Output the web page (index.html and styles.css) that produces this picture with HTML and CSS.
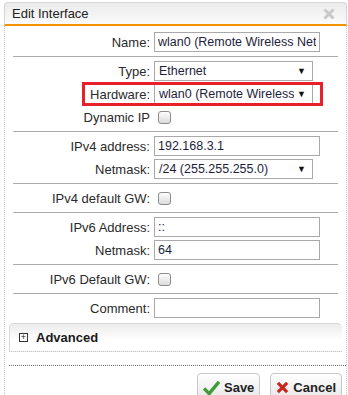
FILE: index.html
```html
<html lang="en"><head>
    <meta charset="UTF-8">
    <title>Edit Interface</title>
    <link rel="stylesheet" href="styles.css">
</head>
<body>
<div class="dialog">
    <div class="titlebar">
        <span class="title">Edit Interface</span>
        <svg class="close" width="12" height="12" viewBox="0 0 12 12">
            <path d="M1.5 1.5 L10.5 10.5 M10.5 1.5 L1.5 10.5" stroke="#c9c9c9" stroke-width="3"/>
        </svg>
    </div>
    <div class="body">
        <div class="form">
            <div class="group">
                <div class="row">
                    <label>Name:</label>
                    <input class="text" type="text" value="wlan0 (Remote Wireless Network)">
                </div>
            </div>
            <div class="group">
                <div class="row">
                    <label>Type:</label>
                    <div class="select"><span>Ethernet</span><span class="arrow">▼</span></div>
                </div>
                <div class="row marked">
                    <label>Hardware:</label>
                    <div class="select"><span>wlan0 (Remote Wireless Network)</span><span class="arrow">▼</span></div>
                </div>
                <div class="row">
                    <label>Dynamic IP</label>
                    <input class="check" type="checkbox">
                </div>
            </div>
            <div class="group">
                <div class="row">
                    <label>IPv4 address:</label>
                    <input class="text" type="text" value="192.168.3.1">
                </div>
                <div class="row">
                    <label>Netmask:</label>
                    <div class="select"><span>/24 (255.255.255.0)</span><span class="arrow">▼</span></div>
                </div>
            </div>
            <div class="group">
                <div class="row">
                    <label>IPv4 default GW:</label>
                    <input class="check" type="checkbox">
                </div>
            </div>
            <div class="group">
                <div class="row">
                    <label>IPv6 Address:</label>
                    <input class="text" type="text" value="::">
                </div>
                <div class="row">
                    <label>Netmask:</label>
                    <input class="text" type="text" value="64">
                </div>
            </div>
            <div class="group">
                <div class="row">
                    <label>IPv6 Default GW:</label>
                    <input class="check" type="checkbox">
                </div>
            </div>
            <div class="group last">
                <div class="row">
                    <label>Comment:</label>
                    <input class="text" type="text" value="">
                </div>
            </div>
        </div>
        <div class="advanced">
            <span class="plus">+</span>
            <span>Advanced</span>
        </div>
        <div class="buttons">
            <button type="button">
                <svg width="17" height="15" viewBox="0 0 18 16">
                    <path d="M1 9 L6.5 14.5 L17 2" fill="none" stroke="#3f9b35" stroke-width="3.6"/>
                </svg>
                Save
            </button>
            <button type="button">
                <svg width="13" height="13" viewBox="0 0 14 14">
                    <path d="M2 2 L12 12 M12 2 L2 12" stroke="#c8281f" stroke-width="3.4"/>
                </svg>
                Cancel
            </button>
        </div>
    </div>
</div>
</body>
</html>
```

FILE: styles.css
```css
body {
    margin: 0;
    padding: 0;
    background: #fff;
    font-family: "Liberation Sans", Arial, sans-serif;
    font-size: 13px;
    color: #222;
    overflow: hidden;
}

.dialog {
    margin-left: 4px;
    width: 343px;
    padding-top: 2px;
}

.titlebar {
    height: 21px;
    display: flex;
    align-items: center;
    justify-content: space-between;
    padding: 0 11px 0 7px;
    border: 1px solid #d6d6d6;
    border-bottom: 2px solid #f39200;
    border-radius: 4px 4px 0 0;
    background: linear-gradient(#ebebeb, #fbfbfb);
}

.title {
    color: #222;
}

.body {
    border-left: 1px dotted #c8c8c8;
    border-right: 1px dotted #c8c8c8;
    padding-bottom: 20px;
}

.form {
    padding: 2px 8px 0 8px;
}

.group {
    display: flex;
    flex-direction: column;
    gap: 3px;
    padding: 4px 0;
    border-bottom: 1px solid #aaa;
}

.group.last {
    border-bottom: none;
    padding-bottom: 5px;
}

.row {
    position: relative;
    display: grid;
    grid-template-columns: 137px 1fr;
    column-gap: 4px;
    align-items: center;
    height: 20px;
}

.row label {
    text-align: right;
    color: #2a2a2a;
}

.row.marked::after {
    content: "";
    position: absolute;
    left: 69px;
    right: 15px;
    top: -2px;
    bottom: -2px;
    border: 3px solid #e8202a;
}

.text {
    width: 166px;
    height: 20px;
    box-sizing: border-box;
    border: 1px solid #a9a9a9;
    padding: 0 3px;
    font-family: inherit;
    font-size: 12.5px;
    color: #1e1e3c;
    margin: 0;
}

.select {
    width: 159px;
    height: 20px;
    box-sizing: border-box;
    border: 1px solid #a9a9a9;
    padding: 0 6px 0 4px;
    display: flex;
    align-items: center;
    justify-content: space-between;
    font-size: 12.5px;
    color: #1e1e3c;
    overflow: hidden;
}

.select span:first-child {
    white-space: nowrap;
    overflow: hidden;
    flex: 1;
}

.select .arrow {
    font-size: 9px;
    color: #111;
    margin-left: 3px;
}

.check {
    appearance: none;
    width: 13px;
    height: 13px;
    margin: 0 0 0 4px;
    border: 1px solid #8c8c8c;
    border-radius: 3px;
    background: linear-gradient(#fdfdfd, #dcdcdc);
}

.advanced {
    margin: 0 4px;
    height: 27px;
    display: flex;
    align-items: center;
    gap: 8px;
    padding-left: 9px;
    border: 1px solid #d8d8d8;
    border-bottom: 1px dotted #c8c8c8;
    border-right: none;
    border-radius: 5px 5px 0 0;
    background: linear-gradient(#ececec, #fff 60%);
    font-weight: bold;
    color: #1a1a1a;
}

.plus {
    width: 7px;
    height: 7px;
    border: 1px solid #333;
    font-size: 9px;
    line-height: 7px;
    text-align: center;
    font-weight: normal;
}

.buttons {
    margin: 13px 0 0 4px;
    padding-top: 7px;
    border-top: 1px dotted #777;
    display: flex;
    justify-content: flex-end;
    gap: 10px;
    padding-right: 4px;
}

.buttons button {
    display: flex;
    align-items: center;
    gap: 4px;
    height: 28px;
    padding: 0 5px;
    border: 1px solid #c8c8c8;
    border-radius: 4px;
    background: linear-gradient(#fff, #e6e6e6);
    font-family: inherit;
    font-size: 13px;
    font-weight: bold;
    color: #222;
}
```
